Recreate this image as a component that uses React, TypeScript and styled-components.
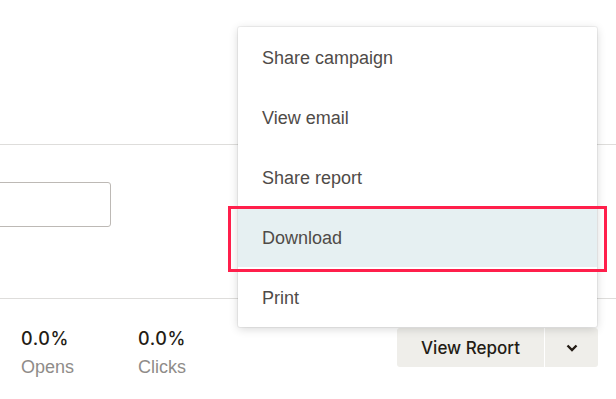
import React from 'react';
import styled, { createGlobalStyle } from 'styled-components';

const GlobalStyle = createGlobalStyle`
  html, body {
    margin: 0;
    padding: 0;
    background: #ffffff;
    font-family: "Liberation Sans", Arial, sans-serif;
    overflow: hidden;
  }
`;

const Page = styled.div`
  width: 616px;
  height: 399px;
  display: flex;
  flex-direction: column;
`;

const Header = styled.div`
  height: 144px;
  border-bottom: 1px solid #dedddb;
`;

const FieldRow = styled.div`
  height: 154px;
  padding-top: 37px;
  box-sizing: border-box;
  border-bottom: 1px solid #dedddb;
`;

const Field = styled.input`
  display: block;
  width: 122px;
  height: 45px;
  margin-left: -11px;
  box-sizing: border-box;
  border: 1px solid #bdb9b5;
  border-radius: 3px;
  background: #fff;
  outline: none;
`;

const StatsRow = styled.div`
  display: flex;
  align-items: flex-start;
  padding: 29px 18px 0 21px;
`;

const Stat = styled.div`
  width: 117px;
  display: flex;
  flex-direction: column;
  gap: 6px;
`;

const StatValue = styled.div`
  font-family: Inter, "Liberation Sans", sans-serif;
  font-size: 18px;
  line-height: 22px;
  font-weight: 500;
  color: #241c15;
  letter-spacing: 0.6px;
`;

const StatLabel = styled.div`
  font-size: 18px;
  line-height: 22px;
  color: #8f8c89;
`;

const ButtonGroup = styled.div`
  position: relative;
  margin-left: auto;
  display: flex;
  height: 39px;
  gap: 1px;
  background: #ffffff;
`;

const GroupButton = styled.button<{ $wide?: boolean }>`
  width: ${(p) => (p.$wide ? '147px' : '53px')};
  height: 39px;
  border: none;
  margin: 0;
  padding: 0;
  background: #efeeea;
  color: #241c15;
  font-family: Inter, "Liberation Sans", sans-serif;
  font-size: 17px;
  font-weight: 500;
  display: flex;
  align-items: center;
  justify-content: center;
  border-radius: ${(p) => (p.$wide ? '3px 0 0 3px' : '0 3px 3px 0')};
`;

const Menu = styled.ul`
  position: absolute;
  right: 1px;
  bottom: calc(100% + 1px);
  width: 359px;
  margin: 0;
  padding: 0;
  list-style: none;
  background: #ffffff;
  border-radius: 2px;
  box-shadow: 0 0 0 1px rgba(0, 0, 0, 0.05), 0 2px 10px rgba(0, 0, 0, 0.16);
  z-index: 10;
`;

const MenuItem = styled.li<{ $active?: boolean }>`
  position: relative;
  height: 60px;
  display: flex;
  align-items: center;
  padding-left: 24px;
  padding-top: 2px;
  box-sizing: border-box;
  font-size: 18px;
  color: #4f4b48;
  background: ${(p) => (p.$active ? '#e6f0f2' : 'transparent')};

  ${(p) =>
    p.$active &&
    `
    &::after {
      content: '';
      position: absolute;
      top: -1px;
      bottom: -5px;
      left: -10px;
      right: -10px;
      border: 3px solid #ff1f4b;
      pointer-events: none;
    }
  `}
`;

const Chevron = () => (
  <svg width="12" height="8" viewBox="0 0 12 8">
    <path d="M1.5 1.5L6 6l4.5-4.5" fill="none" stroke="#241c15" strokeWidth="2.4" />
  </svg>
);

const items = ['Share campaign', 'View email', 'Share report', 'Download', 'Print'];

export default function App() {
  return (
    <Page>
      <GlobalStyle />
      <Header />
      <FieldRow>
        <Field aria-label="search" />
      </FieldRow>
      <StatsRow>
        <Stat>
          <StatValue>0.0%</StatValue>
          <StatLabel>Opens</StatLabel>
        </Stat>
        <Stat>
          <StatValue>0.0%</StatValue>
          <StatLabel>Clicks</StatLabel>
        </Stat>
        <ButtonGroup>
          <Menu>
            {items.map((item) => (
              <MenuItem key={item} $active={item === 'Download'}>
                {item}
              </MenuItem>
            ))}
          </Menu>
          <GroupButton $wide>View Report</GroupButton>
          <GroupButton>
            <Chevron />
          </GroupButton>
        </ButtonGroup>
      </StatsRow>
    </Page>
  );
}
